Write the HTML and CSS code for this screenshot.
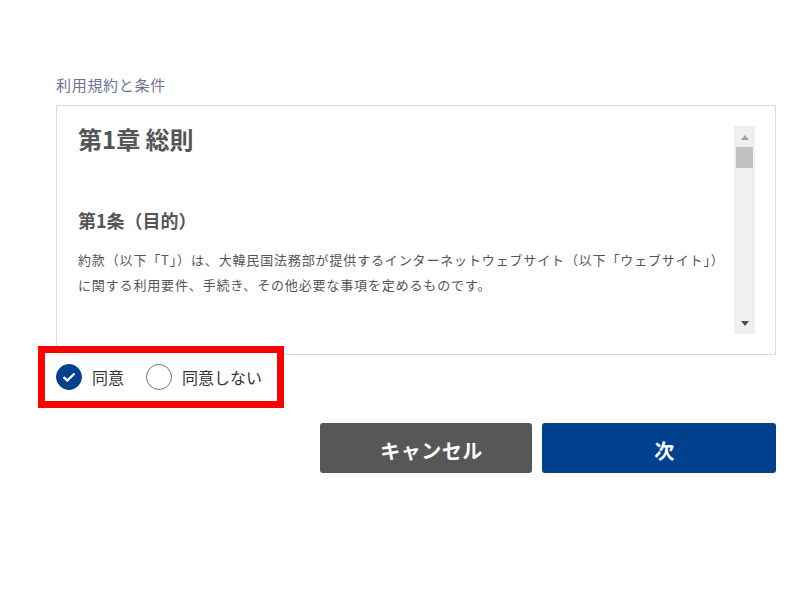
FILE: index.html
```html
<!DOCTYPE html>
<html lang="ja">
<head>
    <meta charset="utf-8">
    <title>利用規約と条件</title>
    <link rel="stylesheet" href="styles.css">
</head>
<body>

<div class="page">
    <div class="terms-label">利用規約と条件</div>

    <div class="terms-box">
        <div class="terms-scroll">
            <h1>第1章 総則</h1>

            <h2>第1条（目的）</h2>
            <p>約款（以下「T」）は、大韓民国法務部が提供するインターネットウェブサイト（以下「ウェブサイト」）に関する利用要件、手続き、その他必要な事項を定めるものです。</p>

            <h2>第2条（約款の効力及び変更）</h2>
            <p>本約款は、ウェブサイトに掲示し、又はその他の方法で利用者に公示することにより効力を生じます。</p>

            <h2>第3条（約款以外の準則）</h2>
            <p>本約款に定めのない事項については、関係法令及びウェブサイトが別途定める運営方針に従います。</p>
        </div>
        <div class="scrollbar">
            <div class="sb-btn sb-up"></div>
            <div class="sb-track"><div class="sb-thumb"></div></div>
            <div class="sb-btn sb-down"></div>
        </div>
    </div>

    <div class="agree">
        <label class="choice">
            <input type="radio" name="agree" value="yes" checked>
            <span>同意</span>
        </label>
        <label class="choice">
            <input type="radio" name="agree" value="no">
            <span>同意しない</span>
        </label>
    </div>

    <div class="actions">
        <button type="button" class="btn btn-cancel">キャンセル</button>
        <button type="button" class="btn btn-next">次</button>
    </div>
</div>

</body>
</html>
```

FILE: styles.css
```css
body {
    margin: 0;
    background-color: #fff;
    font-family: "Noto Sans CJK JP", "Noto Sans", sans-serif;
    color: #333;
}
.page {
    padding: 75px 24px 0 56px;
}
.terms-label {
    font-size: 15px;
    line-height: 20px;
    letter-spacing: 0.7px;
    color: #6b7394;
    margin-bottom: 10px;
}
.terms-box {
    display: flex;
    border: 1px solid #dcdcdc;
    padding: 20px;
    height: 208px;
}
.terms-scroll {
    flex: 1;
    overflow: hidden;
    padding-left: 1px;
}
.terms-scroll h1 {
    margin: 0;
    font-size: 24px;
    line-height: 26px;
    font-weight: bold;
    color: #555;
}
.terms-scroll h2 {
    margin: 55px 0 0 0;
    font-size: 18px;
    line-height: 26px;
    font-weight: bold;
    color: #555;
}
.terms-scroll p {
    margin: 14px 0 0 0;
    font-size: 13px;
    line-height: 25px;
    letter-spacing: 0.85px;
    color: #555;
}

.scrollbar {
    width: 21px;
    display: flex;
    flex-direction: column;
    background-color: #f0f0f0;
}
.sb-btn {
    height: 21px;
    display: flex;
    align-items: center;
    justify-content: center;
}
.sb-up::before {
    content: "";
    margin-top: 2px;
    border-left: 4.5px solid transparent;
    border-right: 4.5px solid transparent;
    border-bottom: 5px solid #a3a3a3;
}
.sb-down::before {
    content: "";
    border-left: 4.5px solid transparent;
    border-right: 4.5px solid transparent;
    border-top: 5px solid #505050;
}
.sb-track {
    flex: 1;
    padding: 0 2px;
}
.sb-thumb {
    height: 21px;
    background-color: #c1c1c1;
}

/* agree radios, highlighted */
.agree {
    display: inline-flex;
    align-items: center;
    gap: 22px;
    margin: -9px 0 0 -18px;
    height: 48px;
    width: 221px;
    padding-left: 11px;
    border: 7px solid #ff0000;
    background-color: #fff;
    position: relative;
}
.choice {
    display: flex;
    align-items: center;
    gap: 10px;
    font-size: 16px;
    line-height: 26px;
    color: #333;
    cursor: pointer;
}
.choice input {
    appearance: none;
    -webkit-appearance: none;
    margin: 0;
    width: 26px;
    height: 26px;
    border: 1.5px solid #777;
    border-radius: 50%;
    background-color: #fff;
}
.choice input:checked {
    border-color: #00408c;
    background-color: #00408c;
    background-image: url("data:image/svg+xml;utf8,<svg xmlns='http://www.w3.org/2000/svg' width='14' height='10'><path d='M1.5 5 L5.2 8.5 L12.5 1.5' fill='none' stroke='white' stroke-width='2.4'/></svg>");
    background-repeat: no-repeat;
    background-position: center;
}

.actions {
    display: flex;
    justify-content: flex-end;
    gap: 10px;
    margin-top: 15px;
}
.btn {
    height: 50px;
    padding: 4px 0 0 11px;
    border: none;
    border-radius: 3px;
    color: white;
    font-family: "Noto Sans CJK JP", "Noto Sans", sans-serif;
    font-size: 20px;
    font-weight: bold;
    letter-spacing: 0.5px;
    cursor: pointer;
}
.btn-cancel {
    width: 212px;
    background-color: #575757;
}
.btn-next {
    width: 234px;
    background-color: #00418e;
}
```
